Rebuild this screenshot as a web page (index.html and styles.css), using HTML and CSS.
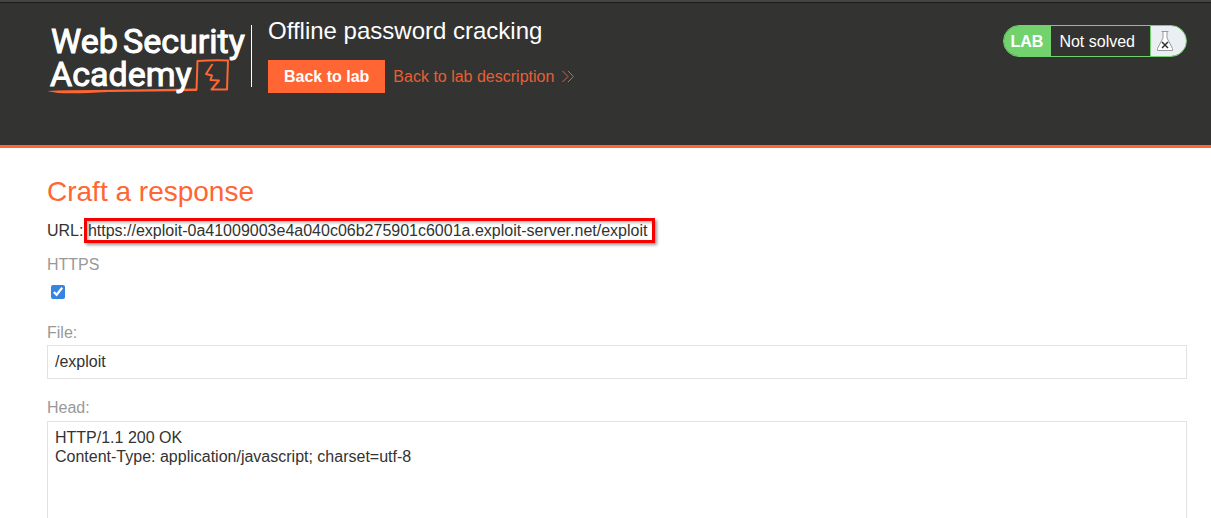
FILE: index.html
```
<!DOCTYPE html>
<html lang="en">
<head>
<meta charset="utf-8">
<title>Offline password cracking</title>
<link rel="stylesheet" href="styles.css">
</head>
<body>
<header class="lab-header">
  <svg class="logo" width="204" height="76" viewBox="0 0 204 76" role="img" aria-label="Web Security Academy">
    <g class="logo-text">
      <text x="3" y="36">Web</text>
      <text x="75" y="36">Security</text>
    </g>
    <path class="logo-line" d="M148.500 73 L149.500 44 Q164 43 180 43.500 L179 72.500 L163.500 72.500 L171 63.500 L162.500 63 L164 58.500 L158 57 L164.500 47"/>
    <path class="logo-swash" d="M-1 74 Q18 73 48 73 L149 71.500 V74 L60 75 Q28 77 10 76Z"/>
    <text class="logo-text" x="2" y="69">Academy</text>
    <path class="logo-rule" d="M203.500 8V70"/>
  </svg>
  <div class="title-block">
    <h2 class="lab-title">Offline password cracking</h2>
    <div class="lab-links">
      <a class="lab-button" href="#">Back to lab</a>
      <a class="lab-description" href="#">Back to lab description
        <svg class="chevrons" width="12" height="12" viewBox="0 0 12 12" aria-hidden="true"><path d="M.5 0 6 5.500 .5 11M6 0 11.500 5.500 6 11"/></svg>
      </a>
    </div>
  </div>
  <div class="status">
    <span class="status-tag">LAB</span>
    <p class="status-text">Not solved</p>
    <span class="status-icon">
      <svg width="18" height="22" viewBox="0 0 18 22" aria-hidden="true">
        <path class="flask" d="M5.500 1.500H12.500M7 2V8L1.500 18.500V20.500H16.500V18.500L11 8V2"/>
        <path class="cross" d="M6 12 12 18M12 12 6 18"/>
      </svg>
    </span>
  </div>
</header>
<main class="content">
  <h1 class="heading">Craft a response</h1>
  <p class="url">URL: <span class="url-box">https://exploit-0a41009003e4a040c06b275901c6001a.exploit-server.net/exploit</span></p>
  <form class="form">
    <div class="field https">
      <label for="https">HTTPS</label>
      <input class="check" id="https" type="checkbox" checked>
    </div>
    <div class="field">
      <label for="file">File:</label>
      <input class="box" id="file" type="text" value="/exploit">
    </div>
    <div class="field">
      <label for="head">Head:</label>
      <textarea class="box area" id="head" rows="12">HTTP/1.1 200 OK
Content-Type: application/javascript; charset=utf-8</textarea>
    </div>
  </form>
</main>
</body>
</html>
```
FILE: styles.css
```
* { box-sizing: border-box; }

html { scrollbar-width: none; }

body {
  margin: 0;
  background: #fff;
  color: #333332;
  font: 16px/20px "Liberation Sans", Arial, sans-serif;
}

h1, h2, p { margin: 0; font-weight: 400; }

.lab-header {
  display: flex;
  align-items: flex-start;
  min-height: 148px;
  padding: 15px 24px 16px 48px;
  border-top: 2px solid #444;
  border-bottom: 3px solid #ff6633;
  background: #333332;
  box-shadow: inset 0 1px #1b1b1b;
}

.logo { flex: none; overflow: visible; }
.logo-text { fill: #fff; font: 400 34px Roboto, sans-serif; stroke: #fff; stroke-width: 1; }
.logo-line { fill: none; stroke: #ff6633; stroke-width: 2; stroke-linejoin: round; }
.logo-swash { fill: #ff6633; }
.logo-rule { stroke: #fff; }

.title-block { flex: 1; margin-left: 16px; }
.lab-title { color: #fff; font-size: 24px; line-height: 28px; }

.lab-links {
  display: flex;
  align-items: center;
  gap: 8px;
  margin-top: 15px;
}

.lab-button {
  padding: 7px 16px 6px;
  background: #ff6633;
  color: #fff;
  font-weight: 700;
  text-decoration: none;
}

.lab-description {
  display: flex;
  align-items: center;
  gap: 8px;
  color: #e85f33;
  text-decoration: none;
}

.chevrons { fill: none; stroke: #e85f33; }

.status {
  display: flex;
  height: 32px;
  margin-top: 8px;
  overflow: hidden;
  border: 1px solid #72d36e;
  border-radius: 16px;
  line-height: 32px;
}

.status-tag { padding: 0 8px 0 7px; background: #72d36e; color: #fff; font-weight: 700; }
.status-text { padding: 0 15px 0 8px; color: #fff; }

.status-icon {
  display: flex;
  align-items: center;
  width: 36px;
  padding-left: 5px;
  border-left: 1px solid #72d36e;
  background: #eaeff3;
}

.flask { fill: #fff; stroke: #999; }
.cross { stroke: #333332; stroke-width: 1.5; }

.content { padding: 28px 24px 0 47px; }
.heading { color: #ff6633; font-size: 28px; line-height: 32px; }
.url { margin-top: 13px; }

.url-box {
  margin-left: -4px;
  padding: 1px 5px 1px 1px;
  border: 3px solid #f80000;
  box-shadow: 2px 2px 3px #999, inset 2px 2px 3px #bbb;
}

.form { margin-top: 14px; }
.field { display: flex; flex-direction: column; margin-bottom: 19px; }
.field label { color: #999; line-height: 20px; }
.https { align-items: flex-start; gap: 10px; margin-bottom: 24px; }

.check {
  width: 14px;
  height: 14px;
  margin: 0 4px;
  accent-color: #3584e4;
}

.box {
  width: 100%;
  margin: 2px 0 0;
  padding: 6px 7px;
  border: 1px solid #e2e2e2;
  border-radius: 0;
  background: #fff;
  color: #333332;
  font: inherit;
  outline: none;
}

.area { display: block; margin-top: 3px; line-height: 19px; resize: none; }
```
